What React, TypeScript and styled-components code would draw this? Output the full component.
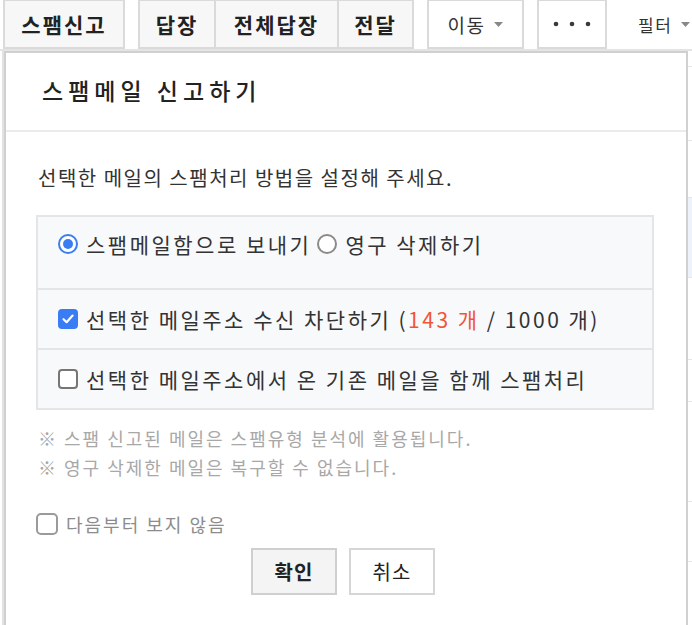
import React from "react";
import styled, { createGlobalStyle } from "styled-components";

const GlobalStyle = createGlobalStyle`
  html, body {
    margin: 0;
    padding: 0;
    background: #ffffff;
  }
  body {
    font-family: "Noto Sans CJK KR", "Noto Sans", sans-serif;
    color: #333;
  }
`;

const listRows = [
  { h: 16, tone: "plain" },
  { h: 74, tone: "plain" },
  { h: 57, tone: "plain" },
  { h: 80, tone: "selected" },
  { h: 82, tone: "plain" },
  { h: 42, tone: "plain" },
  { h: 100, tone: "plain" },
  { h: 60, tone: "plain" },
  { h: 70, tone: "plain" },
];

const App = () => {
  return (
    <>
      <GlobalStyle />
      <Page>
        <Toolbar>
          <ToolButton bold w={122}>스팸신고</ToolButton>
          <Group>
            <ToolButton bold w={78}>답장</ToolButton>
            <ToolButton bold w={125}>전체답장</ToolButton>
            <ToolButton bold w={77}>전달</ToolButton>
          </Group>
          <ToolButton white w={97}>
            이동 <Caret />
          </ToolButton>
          <ToolButton white w={70}>
            <Dots />
          </ToolButton>
          <FilterLink>
            필터 <Caret />
          </FilterLink>
        </Toolbar>

        <MailList>
          {listRows.map((row, i) => (
            <MailRow key={i} selected={row.tone === "selected"} style={{ height: row.h }} />
          ))}
        </MailList>

        <Popup>
          <PopupHeader>
            <Title>스팸메일 신고하기</Title>
          </PopupHeader>
          <PopupBody>
            <Lead>선택한 메일의 스팸처리 방법을 설정해 주세요.</Lead>

            <OptionBox>
              <OptionRow tall>
                <Radio checked />
                <OptionLabel>스팸메일함으로 보내기</OptionLabel>
                <Radio />
                <OptionLabel>영구 삭제하기</OptionLabel>
              </OptionRow>
              <OptionRow>
                <Check checked />
                <OptionLabel>
                  선택한 메일주소 수신 차단하기 (<Count>143 개</Count> / 1000 개)
                </OptionLabel>
              </OptionRow>
              <OptionRow>
                <Check />
                <OptionLabel>선택한 메일주소에서 온 기존 메일을 함께 스팸처리</OptionLabel>
              </OptionRow>
            </OptionBox>

            <Notes>
              <Note>※ 스팸 신고된 메일은 스팸유형 분석에 활용됩니다.</Note>
              <Note>※ 영구 삭제한 메일은 복구할 수 없습니다.</Note>
            </Notes>

            <DontShow>
              <Check muted />
              <span>다음부터 보지 않음</span>
            </DontShow>

            <Actions>
              <ActionButton primary>확인</ActionButton>
              <ActionButton>취소</ActionButton>
            </Actions>
          </PopupBody>
        </Popup>
      </Page>
    </>
  );
};

const Radio = ({ checked }: { checked?: boolean }) => (
  <RadioMark checked={checked}>{checked && <RadioDot />}</RadioMark>
);

const Check = ({ checked, muted }: { checked?: boolean; muted?: boolean }) => (
  <CheckMark checked={checked} muted={muted}>
    {checked && (
      <svg width="14" height="14" viewBox="0 0 14 14">
        <path d="M2.5 7.2 L5.6 10.2 L11.6 3.6" fill="none" stroke="#fff" strokeWidth="2.2" strokeLinecap="round" strokeLinejoin="round" />
      </svg>
    )}
  </CheckMark>
);

const Caret = () => (
  <svg width="9" height="5" viewBox="0 0 9 5" style={{ marginLeft: 9 }}>
    <path d="M0 0 H9 L4.5 5 Z" fill="#888" />
  </svg>
);

const Dots = () => (
  <svg width="38" height="6" viewBox="0 0 38 6">
    <circle cx="3" cy="3" r="2.3" fill="#3a3a3a" />
    <circle cx="19" cy="3" r="2.3" fill="#3a3a3a" />
    <circle cx="35" cy="3" r="2.3" fill="#3a3a3a" />
  </svg>
);

export default App;

const Page = styled.div`
  position: relative;
  width: 692px;
  height: 625px;
  overflow: hidden;
  background: #fff;
`;

const Toolbar = styled.div`
  display: flex;
  align-items: flex-start;
  gap: 13px;
  height: 52px;
  margin-top: -1px;
  padding-left: 3px;
  box-sizing: border-box;
  border-bottom: 2px solid #e4e4e4;
`;

const Group = styled.div`
  display: flex;
  & > * + * {
    margin-left: -2px;
  }
`;

const ToolButton = styled.div<{ bold?: boolean; white?: boolean; w: number }>`
  display: flex;
  align-items: center;
  justify-content: center;
  flex: none;
  box-sizing: border-box;
  width: ${(p) => p.w}px;
  height: 50px;
  border: 2px solid #dadada;
  background: ${(p) => (p.white ? "#fff" : "#f7f7f7")};
  font-size: ${(p) => (p.bold ? 21 : 19)}px;
  font-weight: ${(p) => (p.bold ? 700 : 400)};
  color: ${(p) => (p.bold ? "#222" : "#333")};
  letter-spacing: ${(p) => (p.bold ? 2 : 1.5)}px;
  white-space: nowrap;
`;

const FilterLink = styled.div`
  display: flex;
  align-items: center;
  height: 50px;
  padding-left: 18px;
  font-size: 17px;
  letter-spacing: 1.5px;
  color: #333;
  white-space: nowrap;
`;

const MailList = styled.div`
  display: flex;
  flex-direction: column;
  border-left: 2px solid #e2e2e2;
  margin-left: 2px;
`;

const MailRow = styled.div<{ selected?: boolean }>`
  box-sizing: border-box;
  border-bottom: 1px solid #e6e6e6;
  background: ${(p) => (p.selected ? "#eef2fb" : "#fff")};
`;

const Popup = styled.div`
  position: absolute;
  left: 4px;
  top: 51px;
  width: 684px;
  height: 600px;
  box-sizing: border-box;
  background: #fff;
  border: 2px solid #d0d0d0;
  border-bottom: none;
`;

const PopupHeader = styled.div`
  display: flex;
  align-items: center;
  height: 79px;
  padding: 0 36px 3px;
  box-sizing: border-box;
  border-bottom: 2px solid #ebebeb;
`;

const Title = styled.h2`
  margin: 0;
  font-size: 23px;
  font-weight: 500;
  color: #222;
  letter-spacing: 5px;
`;

const PopupBody = styled.div`
  display: flex;
  flex-direction: column;
  padding: 32px 32px 0 30px;
`;

const Lead = styled.p`
  margin: 0 0 0 2px;
  font-size: 20px;
  line-height: 28px;
  color: #333;
  letter-spacing: 1.5px;
`;

const OptionBox = styled.div`
  margin-top: 23px;
  border: 2px solid #e3e5e8;
  background: #f8f9fb;
`;

const OptionRow = styled.div<{ tall?: boolean }>`
  display: flex;
  align-items: ${(p) => (p.tall ? "flex-start" : "center")};
  gap: 8px;
  box-sizing: border-box;
  height: ${(p) => (p.tall ? 71 : 60)}px;
  padding: ${(p) => (p.tall ? "13px" : "0")} 20px 0;
  & + & {
    border-top: 2px solid #e3e5e8;
  }
`;

const OptionLabel = styled.span`
  font-size: 21px;
  line-height: 28px;
  color: #333;
  letter-spacing: 2.5px;
  white-space: nowrap;
  & + * {
    margin-left: -2px;
  }
`;

const Count = styled.span`
  color: #f0553a;
`;

const RadioMark = styled.span<{ checked?: boolean }>`
  display: flex;
  align-items: center;
  justify-content: center;
  flex: none;
  width: 20px;
  height: 20px;
  margin-top: 4px;
  box-sizing: border-box;
  border-radius: 50%;
  border: 2px solid ${(p) => (p.checked ? "#3a7cf4" : "#8a8a8a")};
  background: #fff;
`;

const RadioDot = styled.span`
  width: 10px;
  height: 10px;
  border-radius: 50%;
  background: #3a7cf4;
`;

const CheckMark = styled.span<{ checked?: boolean; muted?: boolean }>`
  display: flex;
  align-items: center;
  justify-content: center;
  flex: none;
  width: ${(p) => (p.muted ? 22 : 20)}px;
  height: ${(p) => (p.muted ? 22 : 20)}px;
  box-sizing: border-box;
  border-radius: ${(p) => (p.muted ? 5 : 4)}px;
  border: 2px solid ${(p) => (p.checked ? "#3a7cf4" : p.muted ? "#9a9a9a" : "#767676")};
  background: ${(p) => (p.checked ? "#3a7cf4" : "#fff")};
`;

const Notes = styled.div`
  display: flex;
  flex-direction: column;
  margin-top: 14px;
  padding-left: 2px;
`;

const Note = styled.p`
  margin: 0;
  font-size: 18px;
  line-height: 29px;
  color: #a8a8a8;
  letter-spacing: 2px;
`;

const DontShow = styled.label`
  display: flex;
  align-items: center;
  gap: 8px;
  margin-top: 30px;
  font-size: 18px;
  line-height: 24px;
  color: #8c8c8c;
  letter-spacing: 2px;
`;

const Actions = styled.div`
  display: flex;
  justify-content: center;
  gap: 12px;
  margin-top: 12px;
  padding-right: 4px;
`;

const ActionButton = styled.button<{ primary?: boolean }>`
  width: 86px;
  height: 47px;
  box-sizing: border-box;
  border: 2px solid ${(p) => (p.primary ? "#cfcfcf" : "#d6d6d6")};
  background: ${(p) => (p.primary ? "#f4f4f4" : "#fff")};
  font-family: inherit;
  font-size: 20px;
  font-weight: ${(p) => (p.primary ? 700 : 400)};
  letter-spacing: 1px;
  color: #222;
  cursor: pointer;
`;
